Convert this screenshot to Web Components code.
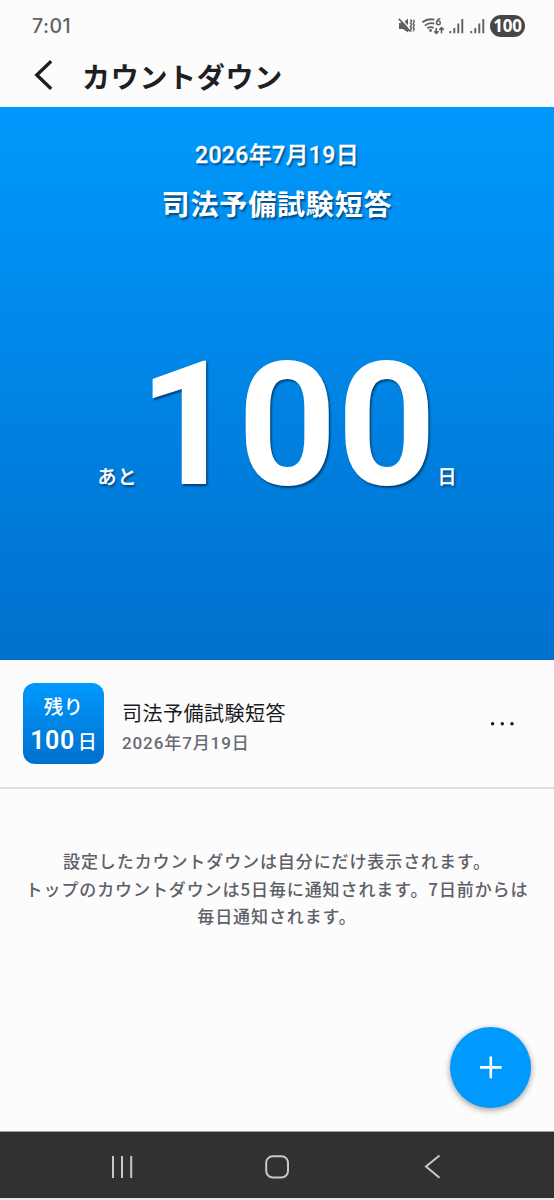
<!DOCTYPE html>
<html lang="ja">
<head>
<meta charset="utf-8">
<title>カウントダウン</title>
<style>
html,body{margin:0;padding:0;background:#fcfcfc}
body{width:554px;height:1200px;overflow:hidden;font-family:Roboto,"Noto Sans CJK JP",sans-serif}
</style>
</head>
<body>
<countdown-screen></countdown-screen>
<script>
function define(name, html) {
  customElements.define(name, class extends HTMLElement {
    constructor() {
      super();
      this.attachShadow({ mode: 'open' }).innerHTML = html;
    }
  });
}

define('status-bar', `
<style>
:host{display:flex;height:52px;box-sizing:border-box;padding:0 29px 0 32px;align-items:center;justify-content:space-between;color:#626262}
.time{font:500 19.5px/24px Inter,sans-serif;letter-spacing:.5px}
.right{display:flex;align-items:center}
.pill{width:35px;height:22px;border-radius:11px;background:#474747;color:#fff;font:700 17px/22px "Open Sans",sans-serif;text-align:center;letter-spacing:-.2px;margin-left:3px}
svg{display:block}
</style>
<span class="time">7:01</span>
<div class="right">
<svg width="90" height="24" viewBox="397 14 90 24" fill="none" stroke="#606060" stroke-width="1.5">
<path d="M399 23h4l5-4.5v14L403 29h-4z" fill="#606060" stroke="none"/>
<path d="M400 17.5l12.5 14" stroke="#fcfcfc" stroke-width="1.4"/>
<path d="M398.8 18.8l11.2 12.6" stroke-width="1.7"/>
<path d="M410.4 19.5l1.3 1.6-1.3 1.8 1.3 1.8-1.3 1.8 1.3 1.8-1.3 1.8 1 1.6M413.4 19.8l.9 1.8-1 1.8 1 1.8-1 1.8 1 1.8-1 2.4" stroke-width="1.4"/>
<path d="M422.4 22.3q5.5-4.4 12-2.6M424.8 25.6q4.2-3.6 9.6-2M427.3 28.2q3-2 6.3-.3" stroke-width="1.9"/>
<circle cx="430.5" cy="30.5" r="1.4" fill="#606060" stroke="none"/>
<path d="M440.3 18.7q-2.9 0-3.7 4" stroke-width="1.5"/><circle cx="438.4" cy="22.8" r="1.9" stroke-width="1.4"/>
<path d="M436.3 28v5.2M434.2 31.2l2.1 2.2 2.1-2.2M441.5 33.2v-5.5M439.3 29.9l2.2-2.2 2.2 2.2" stroke-width="1.6"/>
<g stroke-width="1.9"><path d="M450.3 31v2.3M454.3 28v5.3M458.3 23.5v9.8M462.3 19v14.3M471.3 31v2.3M475.3 28v5.3M479.3 23.5v9.8M483.3 19v14.3"/></g>
</svg>
<div class="pill">100</div>
</div>`);

define('app-header', `
<style>
:host{display:flex;height:55px;align-items:center;padding-left:32px;color:#1d1f24}
svg{display:block;margin-right:30px;position:relative;top:-5.5px}
h1{margin:0;font:700 28px/40px "Noto Sans CJK JP",sans-serif;letter-spacing:.7px;position:relative;top:-3.5px}
</style>
<svg width="20" height="32" viewBox="32 58 20 32" fill="none" stroke="#1d1f24" stroke-width="3.4"><path d="M51.2 61.2L36.8 75l14.4 13.8"/></svg>
<h1><slot></slot></h1>`);

define('countdown-hero', `
<style>
:host{display:flex;flex-direction:column;align-items:center;height:553px;box-sizing:border-box;padding-top:31px;background:linear-gradient(#0099fd,#0070cd);color:#fff;text-shadow:1.5px 1.5px 2px rgba(0,35,70,.65)}
.date{font-weight:500;font-size:23px;line-height:36px;letter-spacing:.35px;-webkit-text-stroke:.3px #fff}
.name{font:700 28px/40px "Noto Sans CJK JP",sans-serif;letter-spacing:.85px;margin-top:9px}
.count{display:flex;align-items:baseline;margin-top:99px;line-height:206px;position:relative;left:.5px}
.small{font:500 19px/28px "Noto Sans CJK JP",sans-serif;letter-spacing:.9px;-webkit-text-stroke:.3px #fff}
.num{font-size:172.5px;font-weight:700;letter-spacing:.4px;margin:0 1px 0 1px}
</style>
<div class="date"><slot name="date"></slot></div>
<div class="name"><slot name="name"></slot></div>
<div class="count"><span class="small">あと</span><span class="num"><slot name="days"></slot></span><span class="small">日</span></div>`);

define('days-badge', `
<style>
:host{display:flex;flex-direction:column;align-items:center;width:81px;height:81px;border-radius:12px;background:linear-gradient(#0099fd,#0070cd);color:#fff;box-sizing:border-box;padding-top:8px}
.top{font:500 19.5px/30px "Noto Sans CJK JP",sans-serif;letter-spacing:.3px}
.bottom{display:flex;align-items:baseline;line-height:36px;margin-top:2px}
.n{font-size:25px;letter-spacing:.6px;font-weight:600}
.d{font:500 19px/36px "Noto Sans CJK JP",sans-serif;margin-left:3px}
</style>
<span class="top">残り</span>
<span class="bottom"><span class="n"><slot></slot></span><span class="d">日</span></span>`);

define('event-row', `
<style>
:host{display:flex;height:128.5px;box-sizing:border-box;border-bottom:2px solid #dcdde0;padding:23px 39px 0 23px}
.text{margin-left:18px;flex:1;padding-top:14px}
.name{font:400 20px/32px "Noto Sans CJK JP",sans-serif;letter-spacing:.5px;color:#191a1d}
.date{font-weight:500;font-size:17px;line-height:28px;letter-spacing:.9px;color:#686b71}
svg{display:block;margin-top:37px}
</style>
<days-badge>100</days-badge>
<div class="text"><div class="name"><slot name="name"></slot></div><div class="date"><slot name="date"></slot></div></div>
<svg width="26" height="8" viewBox="0 0 26 8" fill="#191a1d"><circle cx="3.6" cy="3.8" r="1.7"/><circle cx="13.3" cy="3.8" r="1.7"/><circle cx="23" cy="3.8" r="1.7"/></svg>`);

define('help-note', `
<style>
:host{display:block;padding-top:58.5px;text-align:center;color:#5c6068;white-space:nowrap;font:500 17px/27.5px "Noto Sans CJK JP",sans-serif;letter-spacing:.9px}
</style><slot></slot>`);

define('add-button', `
<style>
:host{display:block;width:81px;height:81px;border-radius:50%;background:#0099fd;box-shadow:0 2px 6px rgba(0,0,0,.4)}
svg{display:block}
</style>
<svg width="81" height="81" viewBox="0 0 81 81" fill="none" stroke="#fff" stroke-width="2.6"><path d="M30 40.4h21.6M40.8 29.6v21.6"/></svg>`);

define('nav-bar', `
<style>
:host{display:block;height:69.5px;box-sizing:border-box;background:#313131;border-top:1px solid #9da1a1;border-bottom:2px solid #e8e8e8}
svg{display:block}
</style>
<svg width="554" height="66" viewBox="0 1132 554 66" fill="none" stroke="#c8c8c8" stroke-width="2"><path d="M113 1156v22M122 1156v22M131.2 1156v22"/><rect x="266.2" y="1156.2" width="21.8" height="21.2" rx="6.5"/><path d="M439.5 1155.5L426 1166.6l13.5 11.2"/></svg>`);

define('countdown-screen', `
<style>
:host{display:flex;flex-direction:column;width:554px;height:1200px;background:#fcfcfc}
help-note{flex:1}
.fab{display:flex;justify-content:flex-end;padding:0 23px 23px 0}
</style>
<status-bar></status-bar>
<app-header>カウントダウン</app-header>
<countdown-hero><span slot="date">2026年7月19日</span><span slot="name">司法予備試験短答</span><span slot="days">100</span></countdown-hero>
<event-row><span slot="name">司法予備試験短答</span><span slot="date">2026年7月19日</span></event-row>
<help-note>設定したカウントダウンは自分にだけ表示されます。<br>トップのカウントダウンは5日毎に通知されます。7日前からは<br>毎日通知されます。</help-note>
<div class="fab"><add-button></add-button></div>
<nav-bar></nav-bar>`);
</script>
</body>
</html>
